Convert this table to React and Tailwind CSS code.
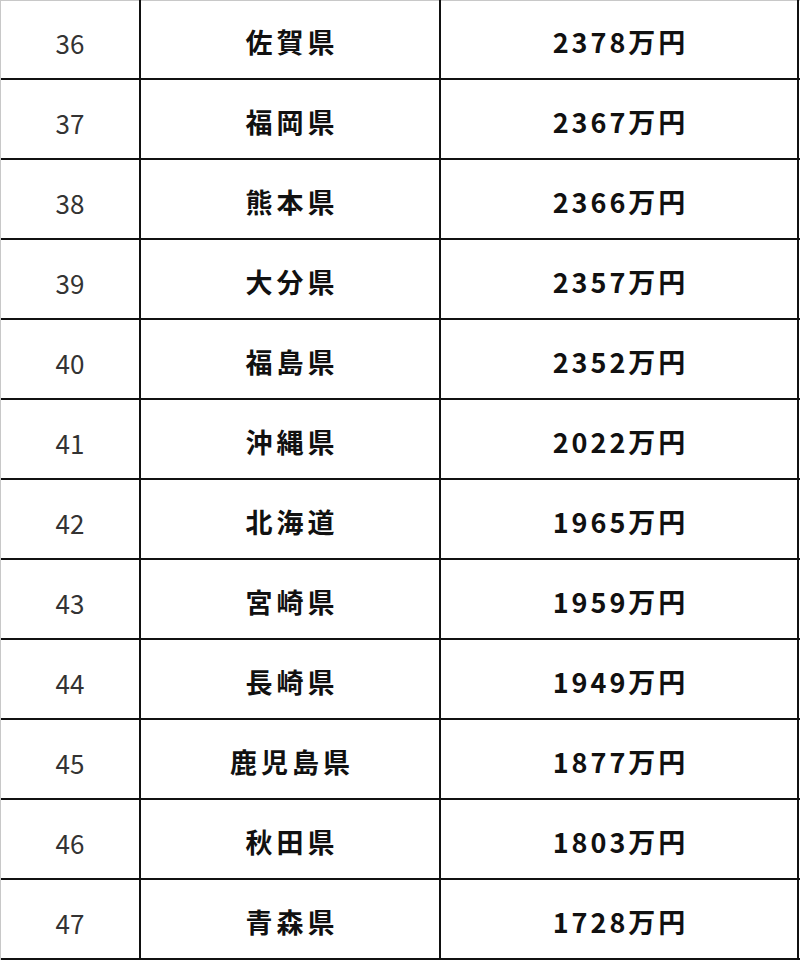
const rows = [
  ["36", "佐賀県", "2378万円"],
  ["37", "福岡県", "2367万円"],
  ["38", "熊本県", "2366万円"],
  ["39", "大分県", "2357万円"],
  ["40", "福島県", "2352万円"],
  ["41", "沖縄県", "2022万円"],
  ["42", "北海道", "1965万円"],
  ["43", "宮崎県", "1959万円"],
  ["44", "長崎県", "1949万円"],
  ["45", "鹿児島県", "1877万円"],
  ["46", "秋田県", "1803万円"],
  ["47", "青森県", "1728万円"],
];

const font = { fontFamily: '"Noto Sans CJK JP", "Liberation Sans", sans-serif' };

export default function App() {
  return (
    <div className="w-[800px] h-[960px] overflow-hidden bg-white pl-px shadow-[inset_1px_1px_0_#c8c8c8]" style={font}>
      {rows.map(([rank, pref, amount]) => (
        <div key={rank} className="grid grid-cols-[140px_300px_358px] h-[80px] border-b-2 border-[#111] text-[#111]">
          <div className="flex items-center justify-center pt-[7px] border-r-2 border-[#111] text-[26px] font-normal text-[#333]">
            {rank}
          </div>
          <div className="flex items-center justify-center pt-[7px] border-r-2 border-[#111] text-[27px] font-bold tracking-[4px] pl-[4px]">
            {pref}
          </div>
          <div className="flex items-center justify-center pt-[7px] border-r-2 border-[#111] text-[27px] font-bold tracking-[3px] pl-[3px]">
            {amount}
          </div>
        </div>
      ))}
    </div>
  );
}
